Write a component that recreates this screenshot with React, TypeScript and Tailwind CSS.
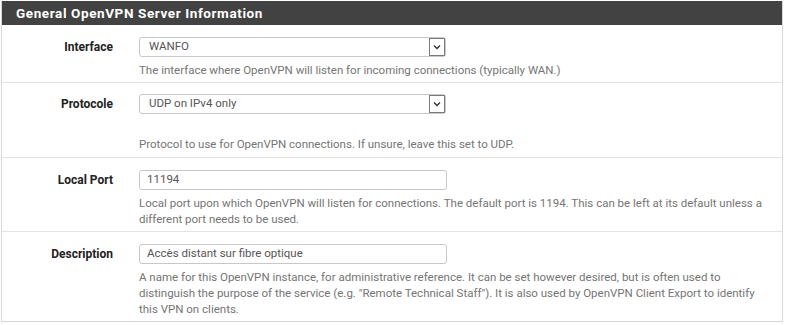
import React from "react";

function Chevron() {
  return (
    <svg width="8" height="6" viewBox="0 0 8 6" fill="none">
      <path d="M1 1.5 L4 4.5 L7 1.5" stroke="#333" strokeWidth="1.4" />
    </svg>
  );
}

function Select({ value }: { value: string }) {
  return (
    <div className="flex h-[20px] w-[307px] items-center rounded-[3px] border border-[#c8c8c8] bg-white pl-[9px] text-[11.5px] text-[#555]">
      <span className="flex-1">{value}</span>
      <span className="flex h-[18px] w-[16px] items-center justify-center border border-[#7a7a7a] bg-white">
        <Chevron />
      </span>
    </div>
  );
}

function Input({ value }: { value: string }) {
  return (
    <div className="flex h-[20px] w-[308px] items-center rounded-[3px] border border-[#c8c8c8] bg-white pl-[7px] text-[11.5px] text-[#555]">
      {value}
    </div>
  );
}

function Row({
  label,
  children,
  help,
  last,
}: {
  label: string;
  children: React.ReactNode;
  help: React.ReactNode;
  last?: boolean;
}) {
  return (
    <div className={`flex pt-3 pb-[4px] ${last ? "" : "border-b border-[#e3e3e3]"}`}>
      <div className="w-[111px] shrink-0 text-right text-[12px] font-bold leading-[20px] text-[#222]">
        {label}
      </div>
      <div className="ml-[26px] flex-1 pr-[12px]">
        {children}
        <div className="mt-[5px] text-[11.5px] leading-[16px] text-[#757575]">{help}</div>
      </div>
    </div>
  );
}

export default function App() {
  return (
    <div className="h-[325px] w-[785px] bg-white pl-[1px] pt-[1px]" style={{ fontFamily: "Roboto, 'Liberation Sans', sans-serif" }}>
      <div className="w-[782px] border border-t-0 border-[#d8d8d8]">
        <div className="flex h-[24px] items-center bg-[#424242] pl-[14px] text-[13.5px] font-bold tracking-[0.6px] text-white">
          General OpenVPN Server Information
        </div>
        <Row
          label="Interface"
          help="The interface where OpenVPN will listen for incoming connections (typically WAN.)"
        >
          <Select value="WANFO" />
        </Row>
        <div className="flex pt-[11px] pb-[5px] border-b border-[#e3e3e3]">
          <div className="w-[111px] shrink-0 text-right text-[12px] font-bold leading-[20px] text-[#222]">
            Protocole
          </div>
          <div className="ml-[26px] flex-1 pr-[12px]">
            <Select value="UDP on IPv4 only" />
            <div className="mt-[22px] text-[11.5px] leading-[16px] text-[#757575]">
              Protocol to use for OpenVPN connections. If unsure, leave this set to UDP.
            </div>
          </div>
        </div>
        <Row
          label="Local Port"
          help="Local port upon which OpenVPN will listen for connections. The default port is 1194. This can be left at its default unless a different port needs to be used."
        >
          <Input value="11194" />
        </Row>
        <Row
          label="Description"
          last
          help={'A name for this OpenVPN instance, for administrative reference. It can be set however desired, but is often used to distinguish the purpose of the service (e.g. "Remote Technical Staff"). It is also used by OpenVPN Client Export to identify this VPN on clients.'}
        >
          <Input value="Accès distant sur fibre optique" />
        </Row>
      </div>
    </div>
  );
}
